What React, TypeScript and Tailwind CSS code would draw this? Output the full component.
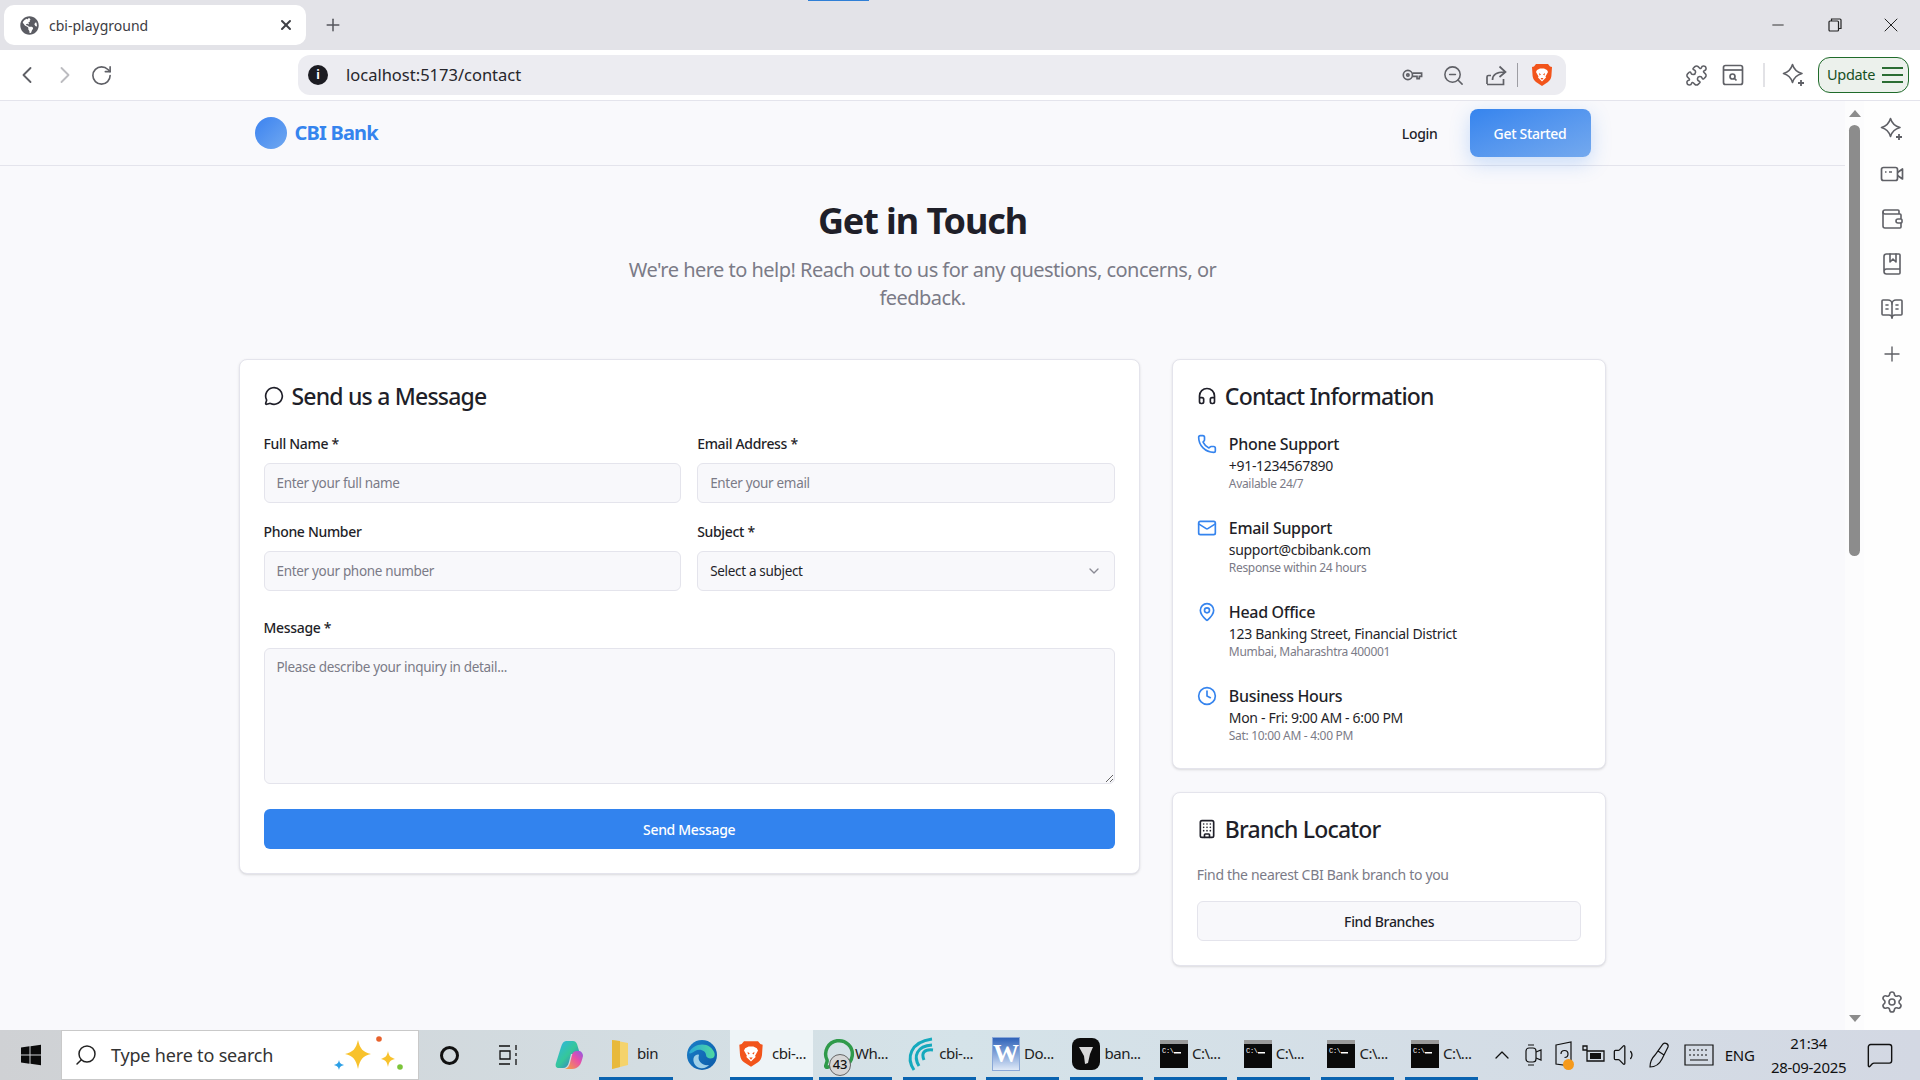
import type { ReactNode } from "react";
import {
  BookMarked,
  BookOpenText,
  Building,
  ChevronDown,
  ChevronLeft,
  ChevronRight,
  ChevronUp,
  Clock,
  Headphones,
  Mail,
  MapPin,
  MessageCircle,
  MessageSquare,
  Minus,
  Phone,
  Plus,
  Puzzle,
  RotateCw,
  Search,
  Settings,
  Volume1,
  Wallet,
  X,
  ZoomOut,
} from "lucide-react";
import { FaGlobeAmericas } from "react-icons/fa";

const Brave = ({ size = 24 }: { size?: number }) => (
  <svg width={size} height={size} viewBox="0 0 24 24">
    <path d="M6 1h12l2 2.500 2 .5-.6 9c-.4 3-1.600 4.500-3.400 6l-6 4-6-4c-1.800-1.500-3-3-3.400-6L2 4l2-.5z" fill="#f2541b" />
    <path d="M7 7l3-1.500h4L17 7l1 2-2.500 4.500.5 1-4 4-4-4 .5-1L6 9z" fill="#fff" />
    <path d="M9 10l2 1.500-1.500 1zM15 10l-2 1.500 1.500 1zM10.500 15h3L12 17z" fill="#f2541b" />
  </svg>
);

const SparklePlus = () => (
  <svg width="24" height="24" viewBox="0 0 24 24" fill="none" stroke="#5f6066" strokeWidth="1.600" strokeLinejoin="round">
    <path d="M10.500 1.500Q12.500 8.500 20 10.500Q12.500 12.500 10.500 19.500Q8.500 12.500 1.500 10.500Q8.500 8.500 10.500 1.500z" />
    <path d="M19 17v6M16 20h6" strokeWidth="1.800" />
  </svg>
);

const Field = ({ label, children }: { label: string; children: ReactNode }) => (
  <div>
    <label className="mb-2 flex h-[23px] items-center text-[14px] font-medium text-[#1f1f29]">{label}</label>
    {children}
  </div>
);

const inputClass =
  "h-10 w-full rounded-md border border-[#e4e4ec] bg-[#f8f8fb] px-3 text-[13.500px] text-[#1f1f29] outline-none placeholder:text-[#7b7b87]";

const cardTitle = "mb-6 flex h-6 items-center gap-2 text-[23px] font-medium tracking-[-0.035em]";

const contactItems = [
  { icon: Phone, title: "Phone Support", line: "+91-1234567890", note: "Available 24/7" },
  { icon: Mail, title: "Email Support", line: "support@cbibank.com", note: "Response within 24 hours" },
  { icon: MapPin, title: "Head Office", line: "123 Banking Street, Financial District", note: "Mumbai, Maharashtra 400001" },
  { icon: Clock, title: "Business Hours", line: "Mon - Fri: 9:00 AM - 6:00 PM", note: "Sat: 10:00 AM - 4:00 PM" },
];

const TabStrip = () => (
  <div className="relative flex h-[50px] items-center bg-[#e3e3e8] pl-1">
    <div className="absolute left-[808px] top-0 h-[1px] w-[61px] bg-[#2f7fd6]" />
    <div className="flex h-10 w-[302px] items-center rounded-[10px] bg-white pl-4 pr-3">
      <FaGlobeAmericas className="text-[#5b5c63]" size={19} />
      <span className="ml-[10px] flex-1 text-[14px] tracking-normal text-[#3c3c43]">cbi-playground</span>
      <X size={16} strokeWidth={3} className="text-[#3f4046]" />
    </div>
    <Plus size={20} strokeWidth={1.800} className="ml-[17px] text-[#55565c]" />
    <div className="ml-auto flex items-center text-[#222]">
      <Minus size={18} strokeWidth={1.200} />
      <svg className="ml-[41px]" width="14" height="14" viewBox="0 0 14 14" fill="none" stroke="#222" strokeWidth="1.200">
        <rect x="1" y="3" width="9.500" height="10" rx="1" />
        <path d="M3.500 3V1h8.500a1 1 0 0 1 1 1v8.500h-2.500" />
      </svg>
      <X className="ml-[37px] mr-[17px]" size={24} strokeWidth={1} />
    </div>
  </div>
);

const Toolbar = () => (
  <div className="flex h-[50px] items-center bg-white pl-[15px] text-[#5f6066]">
    <ChevronLeft size={28} strokeWidth={1.600} className="-mx-[2px]" />
    <ChevronRight size={28} strokeWidth={1.600} className="ml-[12px] text-[#bcbcc0]" />
    <RotateCw size={23} strokeWidth={1.700} className="ml-[11px]" />
    <div className="ml-[185px] flex h-10 w-[1268px] items-center rounded-xl bg-[#ececf1] pl-[10px] pr-3">
      <div className="flex h-5 w-5 items-center justify-center rounded-full bg-[#1c1c22] text-[12px] font-bold leading-none text-white">i</div>
      <span className="ml-[18px] flex-1 text-[16.500px] tracking-normal text-[#26262c]">localhost:5173/contact</span>
      <svg className="mr-[-2px]" width="22" height="22" viewBox="0 0 24 24" fill="none" stroke="#5f6066" strokeWidth="1.800">
        <circle cx="7.500" cy="12" r="5" />
        <circle cx="7.500" cy="12" r="1.300" />
        <path d="M12.500 10h10v3.500h-2.500v2.500h-2.500v-2.500h-5" />
      </svg>
      <ZoomOut size={23} strokeWidth={1.600} className="ml-[21px]" />
      <svg className="ml-[19px]" width="24" height="24" viewBox="0 0 24 24" fill="none" stroke="#5f6066" strokeWidth="1.700">
        <path d="M3 21v-7c0-1 .5-1.500 1.500-1.500H7M3 21.500h16.500V16M8.500 17c0-5 3.500-8 12-8M15.500 3.500l6 5.500-6 5" />
      </svg>
      <div className="ml-[9px] h-6 w-px bg-[#9d9da3]" />
      <div className="ml-[12px]"><Brave /></div>
    </div>
    <Puzzle size={23} strokeWidth={1.600} className="ml-[119px]" />
    <svg className="ml-[13px]" width="24" height="24" viewBox="0 0 24 24" fill="none" stroke="#5f6066" strokeWidth="1.700">
      <rect x="2.500" y="2.500" width="19" height="19" rx="2" />
      <path d="M2.500 7h19" />
      <circle cx="11.500" cy="13.500" r="2.500" />
      <path d="M13.500 15.500l2 2" />
    </svg>
    <div className="ml-[18px] h-6 w-[2px] bg-[#e2e2e6]" />
    <div className="ml-[17px]"><SparklePlus /></div>
    <div className="ml-auto mr-[11px] flex h-9 w-[91px] items-center justify-between rounded-xl border-[1.500px] border-[#1f6b2a] bg-[#ecf1ec] pl-2 pr-[5px] text-[14.500px] text-[#17501f]">
      Update
      <div className="flex w-[21px] flex-col gap-[5px]">
        <div className="h-[2px] bg-[#2b6d33]" />
        <div className="h-[2px] bg-[#2b6d33]" />
        <div className="h-[2px] bg-[#2b6d33]" />
      </div>
    </div>
  </div>
);

const ContactPage = () => (
  <main className="flex-1 overflow-hidden bg-[#f9f9fc] font-['Noto_Sans',sans-serif] tracking-[-0.02em] text-[#1f1f29]">
    <nav className="h-[65px] border-b border-[#e4e4ec]">
      <div className="mx-auto flex h-full w-[1400px] items-center justify-between px-8">
        <div className="flex items-center gap-2">
          <div className="h-8 w-8 rounded-full bg-gradient-to-br from-[#3b82f0] to-[#70a8f0]" />
          <span className="text-[20px] font-bold tracking-[-0.04em] text-[#3584ee]">CBI Bank</span>
        </div>
        <div className="flex items-center gap-[32px]">
          <span className="text-[14px] font-medium">Login</span>
          <button className="h-12 w-[121px] rounded-lg bg-gradient-to-br from-[#3584ee] to-[#74a9ee] text-[14px] font-medium text-white shadow-[0_6px_20px_rgba(53,132,238,0.25)]">
            Get Started
          </button>
        </div>
      </div>
    </nav>

    <div className="mx-auto w-[1400px] px-4 pt-[35px]">
      <div className="text-center">
        <h1 className="mb-[15px] text-[36px] font-bold leading-10 tracking-[-0.03em]">Get in Touch</h1>
        <p className="mx-auto w-[620px] text-[20px] leading-7 tracking-[-0.026em] text-[#7b7b87]">
          We're here to help! Reach out to us for any questions, concerns, or feedback.
        </p>
      </div>

      <div className="mt-[47px] grid grid-cols-3 items-start gap-8">
        <section className="col-span-2 rounded-lg border border-[#e4e4ec] bg-white p-6 shadow-sm">
          <h2 className={cardTitle}>
            <MessageCircle size={20} strokeWidth={2} />
            Send us a Message
          </h2>
          <div className="grid grid-cols-2 gap-x-4 gap-y-[17px]">
            <Field label="Full Name *">
              <input className={inputClass} placeholder="Enter your full name" />
            </Field>
            <Field label="Email Address *">
              <input className={inputClass} placeholder="Enter your email" />
            </Field>
            <Field label="Phone Number">
              <input className={inputClass} placeholder="Enter your phone number" />
            </Field>
            <Field label="Subject *">
              <div className="flex h-10 items-center justify-between rounded-md border border-[#e4e4ec] bg-[#f8f8fb] px-3 text-[13.500px]">
                Select a subject
                <ChevronDown size={16} className="text-[#8a8a94]" />
              </div>
            </Field>
          </div>
          <label className="mt-[27px] mb-[10px] block text-[14px] font-medium leading-5">Message *</label>
          <textarea
            className="block h-[136px] w-full rounded-md border border-[#e4e4ec] bg-[#f8f8fb] px-3 py-2 text-[13.500px] outline-none placeholder:text-[#7b7b87]"
            placeholder="Please describe your inquiry in detail..."
          />
          <button className="mt-[25px] h-10 w-full rounded-md bg-[#3283ee] text-[14px] font-medium text-white">
            Send Message
          </button>
        </section>

        <div className="flex flex-col gap-[23px]">
          <section className="rounded-lg border border-[#e4e4ec] bg-white p-6 shadow-sm">
            <h2 className={cardTitle}>
              <Headphones size={20} strokeWidth={2} />
              Contact Information
            </h2>
            <div className="flex flex-col gap-6">
              {contactItems.map((item) => (
                <div key={item.title} className="flex gap-3">
                  <item.icon size={20} strokeWidth={2} className="mt-[2px] shrink-0 text-[#3584ee]" />
                  <div>
                    <div className="text-[16px] font-medium leading-6">{item.title}</div>
                    <div className="text-[14px] leading-5">{item.line}</div>
                    <div className="text-[12px] leading-4 text-[#7b7b87]">{item.note}</div>
                  </div>
                </div>
              ))}
            </div>
          </section>

          <section className="rounded-lg border border-[#e4e4ec] bg-white p-6 shadow-sm">
            <h2 className={cardTitle}>
              <Building size={20} strokeWidth={2} />
              Branch Locator
            </h2>
            <p className="mb-[16px] text-[14px] leading-5 text-[#7b7b87]">Find the nearest CBI Bank branch to you</p>
            <button className="h-10 w-full rounded-md border border-[#e4e4ec] bg-[#f8f8fb] text-[14px] font-medium">
              Find Branches
            </button>
          </section>
        </div>
      </div>
    </div>
  </main>
);

const Scrollbar = () => (
  <div className="flex w-[19px] flex-col items-center bg-[#fcfcfd] pb-[8px] pt-[9px]">
    <div className="h-0 w-0 border-x-[6.500px] border-b-[7px] border-x-transparent border-b-[#8c8c8c]" />
    <div className="mt-[8px] h-[431px] w-[11px] rounded-full bg-[#8c8c8c]" />
    <div className="mt-auto h-0 w-0 border-x-[6.500px] border-t-[7px] border-x-transparent border-t-[#8c8c8c]" />
  </div>
);

const SidePanel = () => (
  <div className="flex w-[56px] flex-col items-center gap-[21px] bg-[#fefefe] pb-[16px] pt-[16px] text-[#5f6066]">
    <SparklePlus />
    <svg width="24" height="24" viewBox="0 0 24 24" fill="none" stroke="#5f6066" strokeWidth="1.700" strokeLinejoin="round">
      <rect x="1.500" y="5.500" width="16" height="13" rx="2" />
      <path d="M17.500 10.500l5-3.500v10l-5-3.500M5 10h1.500M9 10h3" />
    </svg>
    <Wallet size={24} strokeWidth={1.600} />
    <BookMarked size={24} strokeWidth={1.600} />
    <BookOpenText size={24} strokeWidth={1.600} />
    <Plus size={24} strokeWidth={1.400} />
    <Settings size={24} strokeWidth={1.600} className="mt-auto" />
  </div>
);

const CmdIcon = () => (
  <svg width="28" height="28" viewBox="0 0 28 28">
    <rect width="28" height="28" fill="#0a0a0a" />
    <rect width="28" height="4" fill="#9a9a9a" />
    <text x="2" y="13" fontSize="7" fill="#fff" fontFamily="Liberation Mono">C:\</text>
    <rect x="14" y="12" width="7" height="1.500" fill="#fff" />
  </svg>
);

const TaskItem = ({ icon, label, gap = "gap-1" }: { icon: ReactNode; label: string; gap?: string }) => (
  <div className={`flex h-full w-[73px] shrink-0 items-center justify-center border-b-[3px] border-[#0a63b0] ${gap}`}>
    {icon}
    <span className="text-[15px] tracking-[-0.03em] text-[#222]">{label}</span>
  </div>
);

const Taskbar = () => (
  <div className="flex h-[50px] items-center bg-gradient-to-r from-[#cfd1d4] via-[#d5e3e9] to-[#d3d8e3] font-['Noto_Sans',sans-serif] text-[#111]">
    <div className="flex w-[61px] items-center justify-center">
      <svg width="22" height="22" viewBox="0 0 22 22" fill="#0b0b0b">
        <path d="M1 3.500l8.500-1.200V10.500H1zM10.500 2.200L21 .8v9.700H10.500zM1 11.500h8.500v8.200L1 18.500zM10.500 11.500H21v9.700l-10.500-1.400z" />
      </svg>
    </div>
    <div className="flex h-full w-[358px] items-center border border-[#c9c9c9] bg-white pl-[12px]">
      <Search size={24} strokeWidth={1.500} className="-scale-x-100 text-[#222]" />
      <span className="ml-[13px] text-[18px] tracking-[-0.01em] text-[#333]">Type here to search</span>
      <svg className="ml-auto mr-[10px]" width="84" height="42" viewBox="0 0 78 42">
        <path d="M31 6c2 9 5 12 13 14-8 2-11 5-13 15-2-10-5-13-13-15 8-2 11-5 13-14z" fill="#f8c22c" />
        <path d="M61 17c1 5 2 6 7 8-5 1-6 3-7 8-1-5-2-7-7-8 5-2 6-3 7-8z" fill="#f8c22c" />
        <path d="M12 26c.7 3 1.500 4 5 5-3.500 1-4.300 2-5 5-.7-3-1.500-4-5-5 3.500-1 4.300-2 5-5z" fill="#2b9fe6" />
        <circle cx="52" cy="5" r="2.800" fill="#e8622c" />
        <circle cx="73" cy="33" r="2.800" fill="#7cc43a" />
      </svg>
    </div>
    <div className="flex w-[60px] justify-center">
      <div className="h-[19px] w-[19px] rounded-full border-[3px] border-[#111]" />
    </div>
    <div className="flex w-[60px] justify-center">
      <svg width="22" height="22" viewBox="0 0 22 22" fill="none" stroke="#111" strokeWidth="1.300">
        <path d="M1 2h11M1 20h11M2 7h10v8H2zM18 1v5M18 9v3M18 15v6" />
      </svg>
    </div>
    <div className="flex w-[60px] justify-center">
      <svg width="32" height="32" viewBox="0 0 32 32">
        <defs>
          <linearGradient id="cpA" x1="0" y1="0" x2="1" y2="1">
            <stop offset="0" stopColor="#2fb4ea" />
            <stop offset=".5" stopColor="#35c79a" />
            <stop offset="1" stopColor="#3a5bd8" />
          </linearGradient>
          <linearGradient id="cpB" x1="0" y1="1" x2="1" y2="0">
            <stop offset="0" stopColor="#f5a63a" />
            <stop offset=".6" stopColor="#e84fa8" />
            <stop offset="1" stopColor="#8a5be8" />
          </linearGradient>
        </defs>
        <path d="M13 2h7c2 0 3 1 4 3l3 10h-9l-2 8c-1 4-3 6-6 6H6c-3 0-4-2-3-5l5-16c1-4 3-6 5-6z" fill="url(#cpA)" />
        <path d="M19 30h-7c3-1 4-3 5-6l2-8c1-3 2-4 5-4h3c2 1 3 3 3 5-1 4-2 8-4 10-2 2-4 3-7 3z" fill="url(#cpB)" />
      </svg>
    </div>
    <div className="flex h-full w-[74px] items-center justify-center gap-[8px] border-b-[3px] border-[#0a63b0] pr-[3px]">
      <svg width="18" height="32" viewBox="0 0 18 32">
        <path d="M1 2l16 3v22L1 31z" fill="#f5d36c" />
        <path d="M1 2l8 1v26l-8 2z" fill="#e8b93c" />
      </svg>
      <span className="text-[15px] tracking-[-0.03em] text-[#222]">bin</span>
    </div>
    <div className="flex w-[57px] justify-center">
      <svg width="32" height="32" viewBox="0 0 32 32">
        <defs>
          <linearGradient id="edgeA" x1="0" y1="0" x2="1" y2="1">
            <stop offset="0" stopColor="#1b7fc8" />
            <stop offset="1" stopColor="#0c5aa8" />
          </linearGradient>
          <linearGradient id="edgeB" x1="0" y1="0" x2="1" y2="0">
            <stop offset="0" stopColor="#2aa8d8" />
            <stop offset="1" stopColor="#4fd8a0" />
          </linearGradient>
        </defs>
        <circle cx="16" cy="16" r="15" fill="url(#edgeA)" />
        <path d="M3 14C6 6 17 3 24 8c5 4 6 9 3 11-3 1-7 0-7-3 0-4-6-7-11-4-3 2-5 3-6 2z" fill="url(#edgeB)" />
        <path d="M13 16c-2 6 3 11 10 10-2 2-5 4-9 3-5-1-8-7-6-11 1-2 4-3 5-2z" fill="#9fd0e8" />
      </svg>
    </div>
    <div className="flex h-full w-[83px] items-center justify-center gap-[7px] border-b-[3px] border-[#0a63b0] bg-[#eef4f7]">
      <Brave size={28} />
      <span className="text-[15px] tracking-[-0.03em] text-[#222]">cbi-...</span>
    </div>
    <div className="ml-[6px] flex h-full gap-[10.700px]">
      <TaskItem
        label="Wh..."
        gap="gap-0"
        icon={
          <div className="relative">
            <MessageCircle size={32} strokeWidth={2.600} className="text-[#2f9a4a]" />
            <div className="absolute -bottom-[6px] left-[6px] flex h-[22px] w-[22px] items-center justify-center rounded-full border border-[#666] bg-[#d6d6d6] text-[13px] font-medium leading-none">43</div>
          </div>
        }
      />
      <TaskItem
        label="cbi-..."
        icon={
          <svg width="30" height="36" viewBox="0 0 30 36" fill="none" stroke="#15a9bd" strokeWidth="3">
            <path d="M9 34C1 22 5 6 27 3M14 30C8 20 12 10 27 9M19 24c-3-7 0-11 9-10" />
          </svg>
        }
      />
      <TaskItem
        label="Do..."
        icon={
          <div className="flex h-[34px] w-[28px] items-center justify-center border border-[#8aa8d8] bg-gradient-to-b from-[#2f62b8] to-[#dfe9f7] font-['Liberation_Serif',serif] text-[26px] font-bold leading-none text-white">W</div>
        }
      />
      <TaskItem
        label="ban..."
        icon={
          <svg width="28" height="32" viewBox="0 0 28 32">
            <rect width="28" height="32" rx="8" fill="#0c0c0c" />
            <path d="M7 9h14l-3 7-2 9-3 1-1-8z" fill="#d8d8d8" />
          </svg>
        }
      />
      <TaskItem label="C:\..." icon={<CmdIcon />} />
      <TaskItem label="C:\..." icon={<CmdIcon />} />
      <TaskItem label="C:\..." icon={<CmdIcon />} />
      <TaskItem label="C:\..." icon={<CmdIcon />} />
    </div>
    <ChevronUp size={24} strokeWidth={1.300} className="ml-[12px]" />
    <svg className="ml-[9px]" width="20" height="24" viewBox="0 0 20 24" fill="none" stroke="#111" strokeWidth="1.200">
      <rect x="3" y="5" width="10" height="14" rx="3" />
      <path d="M13 9l5-2v10l-5-2M5 2h6M5 22h6" />
    </svg>
    <div className="relative ml-[11px]">
      <svg width="20" height="30" viewBox="0 0 20 30" fill="none" stroke="#111" strokeWidth="1.200">
        <path d="M2 5l15-3v24l-15-2zM7 14a3.500 3.500 0 1 1 3.500 3.500" />
      </svg>
      <div className="absolute bottom-0 right-0 h-[11px] w-[11px] rounded-full bg-[#f59a1c]" />
    </div>
    <svg className="ml-[8px]" width="24" height="22" viewBox="0 0 24 22">
      <path d="M1 2h4v4H1zM5 7h17v10H5z" fill="none" stroke="#111" strokeWidth="1.300" />
      <path d="M8 9h11v6H8z" fill="#111" />
    </svg>
    <Volume1 size={28} strokeWidth={1.100} className="ml-[6px]" />
    <svg className="ml-[8px]" width="24" height="28" viewBox="0 0 24 28" fill="none" stroke="#111" strokeWidth="1.200">
      <path d="M2 26c0-5 2-9 5-12l8-11c2-2 6 0 5 3l-6 12c-2 4-5 8-12 8zM10 10l6 4" />
    </svg>
    <svg className="ml-[12px]" width="30" height="24" viewBox="0 0 30 24" fill="none" stroke="#111" strokeWidth="1.200">
      <path d="M1 2h28v20H1zM6 17h18" />
      <path d="M5 7h20M5 12h20" strokeDasharray="2 2" />
    </svg>
    <span className="ml-[11px] text-[15px] tracking-[-0.02em]">ENG</span>
    <div className="ml-[14px] flex w-[80px] flex-col items-center text-[15px] leading-[24px] tracking-[-0.02em]">
      <span>21:34</span>
      <span>28-09-2025</span>
    </div>
    <MessageSquare size={28} strokeWidth={1.200} className="ml-[17px]" />
  </div>
);

export default function App() {
  return (
    <div className="flex h-screen w-screen flex-col overflow-hidden font-['Noto_Sans',sans-serif] tracking-[-0.02em]">
      <TabStrip />
      <Toolbar />
      <div className="flex min-h-0 flex-1 border-t border-[#e4e4ec]">
        <ContactPage />
        <Scrollbar />
        <SidePanel />
      </div>
      <Taskbar />
    </div>
  );
}
